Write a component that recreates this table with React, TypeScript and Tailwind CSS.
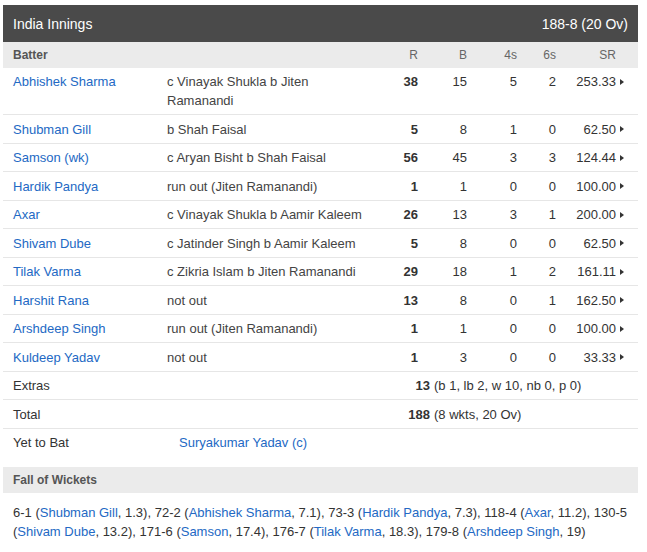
import React from 'react';

type Batter = {
  name: string;
  out: string;
  r: number;
  b: number;
  fours: number;
  sixes: number;
  sr: string;
};

const batters: Batter[] = [
  { name: 'Abhishek Sharma', out: 'c Vinayak Shukla b Jiten Ramanandi', r: 38, b: 15, fours: 5, sixes: 2, sr: '253.33' },
  { name: 'Shubman Gill', out: 'b Shah Faisal', r: 5, b: 8, fours: 1, sixes: 0, sr: '62.50' },
  { name: 'Samson (wk)', out: 'c Aryan Bisht b Shah Faisal', r: 56, b: 45, fours: 3, sixes: 3, sr: '124.44' },
  { name: 'Hardik Pandya', out: 'run out (Jiten Ramanandi)', r: 1, b: 1, fours: 0, sixes: 0, sr: '100.00' },
  { name: 'Axar', out: 'c Vinayak Shukla b Aamir Kaleem', r: 26, b: 13, fours: 3, sixes: 1, sr: '200.00' },
  { name: 'Shivam Dube', out: 'c Jatinder Singh b Aamir Kaleem', r: 5, b: 8, fours: 0, sixes: 0, sr: '62.50' },
  { name: 'Tilak Varma', out: 'c Zikria Islam b Jiten Ramanandi', r: 29, b: 18, fours: 1, sixes: 2, sr: '161.11' },
  { name: 'Harshit Rana', out: 'not out', r: 13, b: 8, fours: 0, sixes: 1, sr: '162.50' },
  { name: 'Arshdeep Singh', out: 'run out (Jiten Ramanandi)', r: 1, b: 1, fours: 0, sixes: 0, sr: '100.00' },
  { name: 'Kuldeep Yadav', out: 'not out', r: 1, b: 3, fours: 0, sixes: 0, sr: '33.33' },
];

const fow: [string, string, string][] = [
  ['6-1', 'Shubman Gill', '1.3'],
  ['72-2', 'Abhishek Sharma', '7.1'],
  ['73-3', 'Hardik Pandya', '7.3'],
  ['118-4', 'Axar', '11.2'],
  ['130-5', 'Shivam Dube', '13.2'],
  ['171-6', 'Samson', '17.4'],
  ['176-7', 'Tilak Varma', '18.3'],
  ['179-8', 'Arshdeep Singh', '19'],
];

const cols = 'grid grid-cols-[154px_221px_40px_49px_50px_39px_60px_22px]';

const Arrow = () => (
  <span className="ml-[4px] inline-block h-0 w-0 border-y-[3.5px] border-l-[4px] border-y-transparent border-l-[#333]" />
);

export default function App() {
  return (
    <div className="bg-white pl-[3px] pt-[5px] text-[13px] text-[#333] font-['Liberation_Sans',Arial,sans-serif]">
      <div className="w-[635px]">
        {/* innings header */}
        <div className="flex h-[37px] items-center justify-between bg-[#4a4a4a] px-[10px] pt-[1px] text-[14px] text-white">
          <span>India Innings</span>
          <span>188-8 (20 Ov)</span>
        </div>

        {/* column labels */}
        <div className={`${cols} h-[25.5px] items-center bg-[#ebebeb] pt-[1px] text-[12px] text-[#666]`}>
          <span className="pl-[10px] font-bold text-[#555]">Batter</span>
          <span />
          <span className="text-right">R</span>
          <span className="text-right">B</span>
          <span className="text-right">4s</span>
          <span className="text-right">6s</span>
          <span className="text-right">SR</span>
          <span />
        </div>

        {batters.map((p) => (
          <div key={p.name} className={`${cols} border-b border-[#e6e6e6] pt-[4.5px] pb-[4px] leading-[19px]`}>
            <span className="pl-[10px] text-[#2369c4]">{p.name}</span>
            <span className="px-[10px] text-[#444]">{p.out}</span>
            <span className="text-right font-bold">{p.r}</span>
            <span className="text-right">{p.b}</span>
            <span className="text-right">{p.fours}</span>
            <span className="text-right">{p.sixes}</span>
            <span className="text-right">{p.sr}</span>
            <span className="flex h-[19px] items-center">
              <Arrow />
            </span>
          </div>
        ))}

        <div className="flex border-b border-[#e6e6e6] pt-[4.5px] pb-[4px] leading-[19px]">
          <span className="w-[375px] pl-[10px]">Extras</span>
          <span className="w-[52px] text-right font-bold">13</span>
          <span className="pl-[4px]">(b 1, lb 2, w 10, nb 0, p 0)</span>
        </div>
        <div className="flex border-b border-[#e6e6e6] pt-[4.5px] pb-[4px] leading-[19px]">
          <span className="w-[375px] pl-[10px]">Total</span>
          <span className="w-[52px] text-right font-bold">188</span>
          <span className="pl-[4px]">(8 wkts, 20 Ov)</span>
        </div>
        <div className="flex pt-[4.5px] pb-[4px] leading-[19px]">
          <span className="w-[176px] pl-[10px]">Yet to Bat</span>
          <span className="text-[#2369c4]">Suryakumar Yadav (c)</span>
        </div>

        {/* fall of wickets */}
        <div className="mt-[11px] flex h-[26px] items-center bg-[#ebebeb] px-[10px] text-[12px] font-bold text-[#555]">
          Fall of Wickets
        </div>
        <p className="px-[10px] pt-[10px] leading-[19px]">
          {fow.map(([score, name, over], i) => (
            <React.Fragment key={score}>
              {score} (<span className="text-[#2369c4]">{name}</span>, {over}){i < fow.length - 1 ? ', ' : ''}
            </React.Fragment>
          ))}
        </p>
      </div>
    </div>
  );
}
